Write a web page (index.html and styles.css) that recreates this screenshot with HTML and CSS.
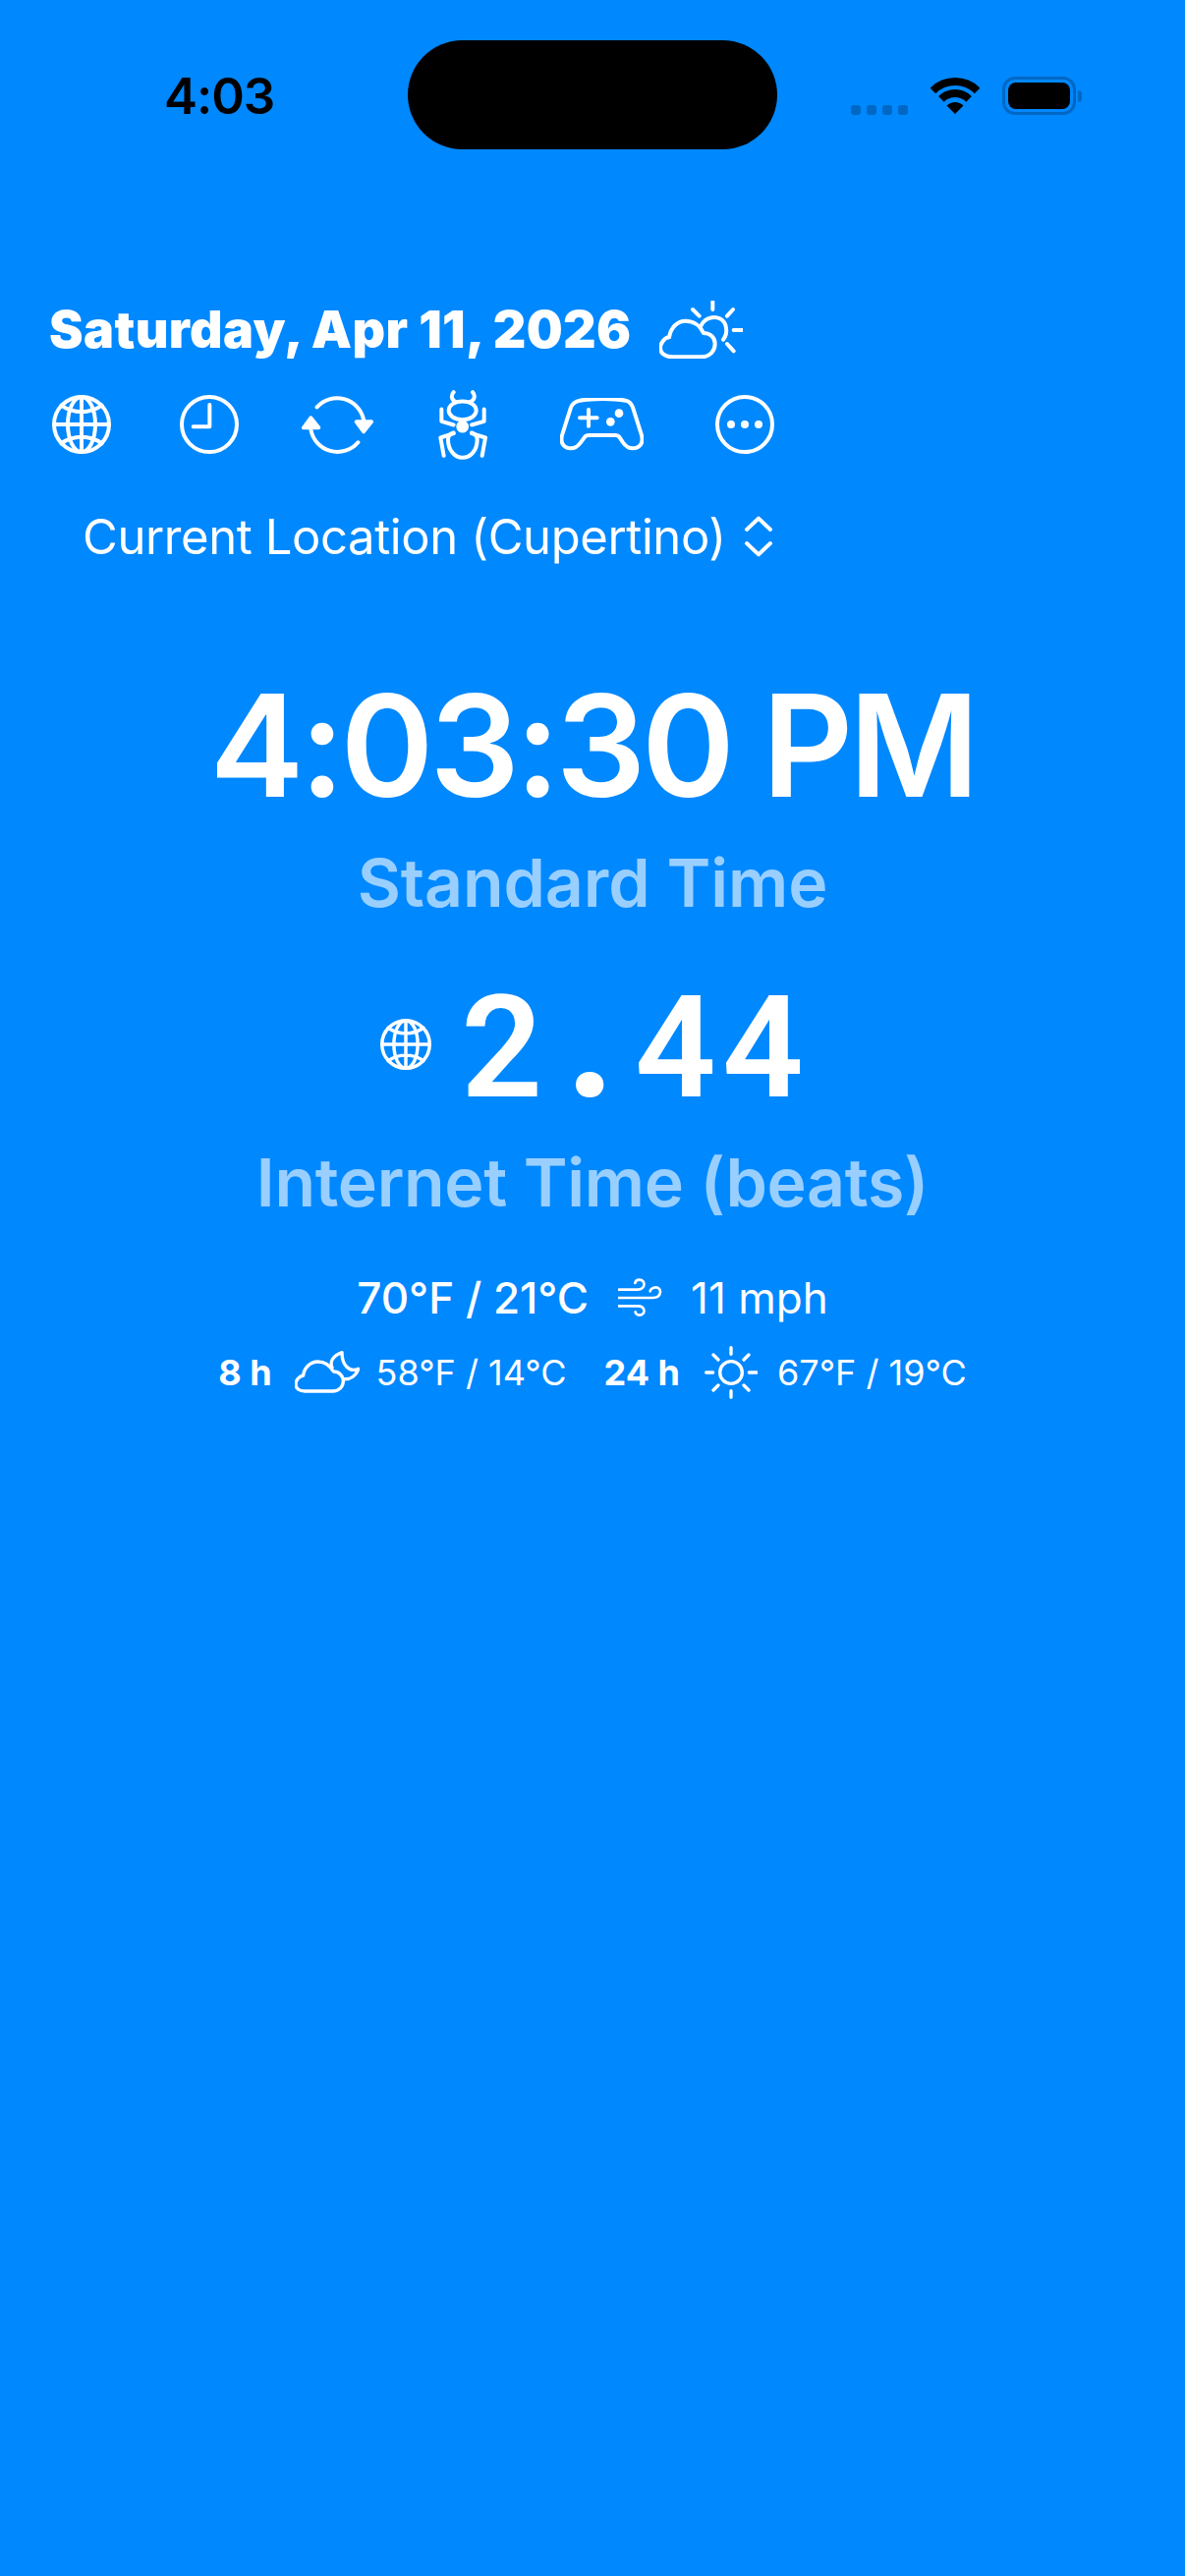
FILE: index.html
```html
<!DOCTYPE html>
<html lang="en">
<head>
    <meta charset="UTF-8">
    <meta name="viewport" content="width=device-width, initial-scale=1.0">
    <title>Internet Time</title>
    <link rel="stylesheet" href="styles.css">
</head>
<body>
    <!-- Status bar -->
    <div class="status-bar">
        <span class="status-time">4:03</span>
        <div class="island"></div>
        <div class="status-icons">
            <div class="cells"><i></i><i></i><i></i><i></i></div>
            <svg class="wifi" width="50" height="37" viewBox="0 0 50 37">
                <path d="M2.4 13.4A32 32 0 0 1 47.6 13.4" fill="none" stroke="#000" stroke-width="8"/>
                <path d="M10.9 21.9A20 20 0 0 1 39.1 21.9" fill="none" stroke="#000" stroke-width="8"/>
                <path d="M25 37L16.5 28.5A12 12 0 0 1 33.5 28.5Z" fill="#000"/>
            </svg>
            <div class="battery"><div class="battery-fill"></div></div>
            <div class="battery-nub"></div>
        </div>
    </div>

    <!-- Date -->
    <div class="date-row">
        <span class="date">Saturday, Apr 11, 2026</span>
        <svg class="line-icon" width="85" height="59" viewBox="750 73 255 177">
            <path d="M913 77V100M852 100L872 120M975 100L957 120M977 163H1003M957 205L977 227"/>
            <path d="M878 148C888 128 915 118 935 128C955 138 962 170 945 192"/>
            <path d="M790 245H880C905 245 920 225 920 205C920 185 905 172 885 172C875 150 855 135 830 135C805 135 785 155 780 185C765 185 753 205 753 218C753 235 770 245 790 245Z"/>
        </svg>
    </div>

    <!-- Toolbar -->
    <div class="toolbar">
        <svg class="line-icon" width="60" height="60" viewBox="0 0 180 180">
            <circle cx="90" cy="90" r="84"/>
            <ellipse cx="90" cy="90" rx="42" ry="84"/>
            <path d="M90 6V174M6 90H174M28 32C65 58 115 58 152 32M28 148C65 122 115 122 152 148"/>
        </svg>
        <svg class="line-icon gap-clock" width="60" height="60" viewBox="0 0 180 180">
            <circle cx="90" cy="90" r="84"/>
            <path d="M91 30V97H41"/>
        </svg>
        <svg class="line-icon gap-sync" width="73" height="60" viewBox="0 0 220 180">
            <path d="M47 37A83 83 0 0 1 190 75M173 145A83 83 0 0 1 28 105"/>
            <path class="solid" d="M168 82H214L190 112ZM6 100H52L28 70Z"/>
        </svg>
        <svg class="line-icon gap-bug" width="50" height="71" viewBox="78 350 150 212">
            <path d="M125 356C116 366 118 380 132 386M183 356C192 366 190 380 175 386"/>
            <path d="M152 384C176 384 194 396 194 412C194 428 176 440 152 440C128 440 110 428 110 412C110 396 128 384 152 384Z"/>
            <path d="M88 408V445L125 456M218 408V445L180 456"/>
            <circle class="solid" cx="152" cy="461" r="19"/>
            <path d="M125 480C112 484 108 490 108 500C108 535 130 556 152 556C176 556 197 535 197 500C197 490 192 484 180 480"/>
            <path d="M95 550L85 495L125 482M212 550L222 495L180 482"/>
        </svg>
        <svg class="line-icon gap-pad" width="85" height="54" viewBox="450 380 255 160">
            <path d="M510 387C550 380 610 380 650 387C662 390 668 397 672 408L698 490C706 515 695 533 672 533C658 533 650 526 642 515L632 500C628 494 625 493 618 493H538C531 493 528 494 524 500L513 515C505 526 497 533 483 533C460 533 449 515 457 490L483 408C487 397 497 390 510 387Z"/>
            <path d="M510 440H563M537 415V465"/>
            <circle class="solid" cx="604" cy="452" r="13"/>
            <circle class="solid" cx="630" cy="426" r="13"/>
        </svg>
        <svg class="line-icon gap-more" width="60" height="60" viewBox="0 0 180 180">
            <circle cx="90" cy="90" r="84"/>
            <circle class="solid" cx="48" cy="90" r="12"/>
            <circle class="solid" cx="90" cy="90" r="12"/>
            <circle class="solid" cx="132" cy="90" r="12"/>
        </svg>
    </div>

    <!-- Location picker -->
    <div class="location-row">
        <span class="location">Current Location (Cupertino)</span>
        <svg class="line-icon" width="30" height="42" viewBox="0 0 90 126">
            <path d="M9 42L45 8L81 42M9 84L45 118L81 84"/>
        </svg>
    </div>

    <!-- Clocks -->
    <div class="clocks">
        <div class="big-time">4:03:30 PM</div>
        <div class="caption standard">Standard Time</div>
        <div class="beats-row">
            <svg class="line-icon beats-globe" width="52" height="52" viewBox="0 0 180 180">
                <circle cx="90" cy="90" r="84"/>
                <ellipse cx="90" cy="90" rx="42" ry="84"/>
                <path d="M90 6V174M6 90H174M28 32C65 58 115 58 152 32M28 148C65 122 115 122 152 148"/>
            </svg>
            <span class="beats">2<span class="beats-dot">.</span>44</span>
        </div>
        <div class="caption internet">Internet Time (beats)</div>
    </div>

    <!-- Weather -->
    <div class="weather-now">
        <span class="temp-now">70°F / 21°C</span>
        <svg class="wind-icon" width="46" height="40" viewBox="80 95 138 120">
            <path d="M82 130H140C165 130 165 100 145 100C138 100 133 105 132 110M82 155H185C215 155 215 123 195 123C185 123 178 130 178 135M82 180H140C165 180 165 208 145 208C138 208 133 203 133 198"/>
        </svg>
        <span class="wind">11 mph</span>
    </div>
    <div class="forecast">
        <span class="hours">8 h</span>
        <svg class="line-icon small" width="66" height="44" viewBox="294 318 198 130">
            <path d="M325 440H410C430 440 442 425 442 410C442 392 428 380 412 380C400 360 385 350 365 350C340 350 322 370 320 392C305 395 297 408 297 420C297 432 308 440 325 440Z"/>
            <path d="M408 368C400 350 410 332 438 322C438 360 460 384 488 372C482 392 465 405 445 403"/>
        </svg>
        <span class="temp first">58°F / 14°C</span>
        <span class="hours second">24 h</span>
        <svg class="line-icon small" width="54" height="54" viewBox="344 300 162 162">
            <circle cx="425" cy="381" r="34"/>
            <path d="M425 305V325M425 437V457M349 381H370M480 381H503M371 327L386 342M479 327L464 342M371 435L386 420M479 435L464 420"/>
        </svg>
        <span class="temp">67°F / 19°C</span>
    </div>
</body>
</html>
```

FILE: styles.css
```css
body {
    margin: 0;
    width: 1206px;
    height: 2622px;
    overflow: hidden;
    background-color: #0088ff;
    color: white;
    font-family: Inter, "Noto Sans", sans-serif;
}

/* Status bar */
.status-bar {
    position: relative;
    height: 152px;
}

.status-time {
    position: absolute;
    left: 167px;
    top: 68px;
    font-size: 51px;
    line-height: 60px;
    font-weight: 600;
    letter-spacing: -1px;
    color: black;
}

.island {
    position: absolute;
    left: 415px;
    top: 41px;
    width: 376px;
    height: 111px;
    border-radius: 56px;
    background: black;
}

.status-icons {
    position: absolute;
    left: 866px;
    top: 78px;
    display: flex;
    align-items: center;
}

.cells {
    display: flex;
    gap: 6px;
    margin-top: 28px;
    margin-right: 23px;
}

.cells i {
    width: 10px;
    height: 10px;
    border-radius: 3px;
    background: #0068c4;
}

.wifi {
    margin-right: 23px;
}

.battery {
    box-sizing: border-box;
    width: 75px;
    height: 39px;
    padding: 3px;
    border: 3px solid #0068c4;
    border-radius: 13px;
}

.battery-fill {
    height: 100%;
    border-radius: 8px;
    background: black;
}

.battery-nub {
    width: 4px;
    height: 12px;
    margin-left: 2px;
    border-radius: 0 4px 4px 0;
    background: #0068c4;
}

/* Line icons */
.line-icon {
    flex: none;
    fill: none;
    stroke: white;
    stroke-width: 12;
    stroke-linecap: round;
    stroke-linejoin: round;
}

.line-icon .solid {
    fill: white;
}

.line-icon circle.solid {
    stroke: none;
}

.line-icon.small {
    stroke-width: 10;
}

.wind-icon {
    flex: none;
    fill: none;
    stroke: white;
    stroke-width: 8;
    stroke-linecap: round;
}

/* Date */
.date-row {
    display: flex;
    align-items: center;
    height: 70px;
    margin-top: 148px;
    padding-left: 50px;
}

.date {
    font-size: 52px;
    font-weight: 900;
    letter-spacing: 0.4px;
    margin-right: 28px;
}

/* Toolbar */
.toolbar {
    display: flex;
    align-items: center;
    height: 72px;
    margin-top: 26px;
    padding-left: 53px;
}

.gap-clock { margin-left: 70px; }
.gap-sync { margin-left: 64px; }
.gap-bug { margin-left: 66px; }
.gap-pad { margin-left: 74px; }
.gap-more { margin-left: 73px; }

/* Location */
.location-row {
    display: flex;
    align-items: center;
    height: 60px;
    margin-top: 48px;
    padding-left: 84px;
}

.location {
    font-size: 49px;
    letter-spacing: -0.4px;
    margin-right: 18px;
}

/* Clocks */
.clocks {
    text-align: center;
    margin-top: 98px;
}

.big-time {
    font-size: 144px;
    line-height: 170px;
    font-weight: 600;
    letter-spacing: -4.4px;
}

.caption {
    font-weight: 600;
    color: rgba(255, 255, 255, 0.6);
}

.standard {
    font-size: 68px;
    line-height: 84px;
    margin-top: 12px;
    letter-spacing: -0.1px;
}

.beats-row {
    display: flex;
    justify-content: center;
    align-items: center;
    height: 150px;
    margin-top: 51px;
}

.beats-globe {
    margin-left: 5px;
    margin-right: 30px;
    margin-bottom: 6px;
}

.beats {
    font-family: Roboto, sans-serif;
    font-size: 145px;
    line-height: 150px;
    font-weight: 600;
    letter-spacing: 6px;
}

.beats-dot {
    font-size: 190px;
    line-height: 0;
    letter-spacing: 0;
    margin: 0 18px 0 16px;
}

.internet {
    font-size: 68px;
    line-height: 84px;
    margin-top: 20px;
    letter-spacing: -0.3px;
}

/* Weather */
.weather-now {
    display: flex;
    justify-content: center;
    align-items: center;
    margin-top: 48px;
    height: 56px;
    font-size: 44px;
}

.temp-now {
    font-weight: 500;
}

.wind-icon {
    margin: 0 28px 0 30px;
}

.forecast {
    display: flex;
    justify-content: center;
    align-items: center;
    margin-top: 18px;
    height: 60px;
    font-size: 36px;
}

.hours {
    font-weight: 700;
    margin-right: 23px;
}

.hours.second {
    margin-left: 38px;
    margin-right: 25px;
}

.temp {
    margin-left: 20px;
}

.temp.first {
    margin-left: 17px;
}
```
